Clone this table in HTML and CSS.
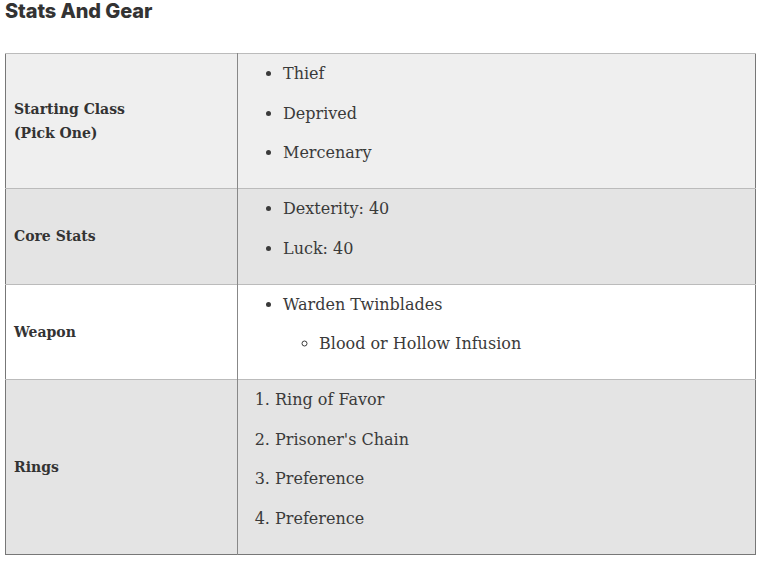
FILE: index.html
```html
<!DOCTYPE html>
<html>
<head>
<meta charset="utf-8">
<link rel="stylesheet" href="styles.css">
</head>
<body>
<div class="page">
  <h2 class="title">Stats And Gear</h2>
  <table class="gear">
    <colgroup>
      <col class="col-label">
      <col class="col-value">
    </colgroup>
    <tr class="row-a">
      <th>Starting Class<br>(Pick One)</th>
      <td>
        <ul class="list">
          <li>Thief</li>
          <li>Deprived</li>
          <li>Mercenary</li>
        </ul>
      </td>
    </tr>
    <tr class="row-b">
      <th>Core Stats</th>
      <td>
        <ul class="list">
          <li>Dexterity: 40</li>
          <li>Luck: 40</li>
        </ul>
      </td>
    </tr>
    <tr class="row-c">
      <th>Weapon</th>
      <td>
        <ul class="list">
          <li>Warden Twinblades
            <ul class="sub">
              <li>Blood or Hollow Infusion</li>
            </ul>
          </li>
        </ul>
      </td>
    </tr>
    <tr class="row-b">
      <th>Rings</th>
      <td>
        <ol class="list olist">
          <li>Ring of Favor</li>
          <li>Prisoner's Chain</li>
          <li>Preference</li>
          <li>Preference</li>
        </ol>
      </td>
    </tr>
  </table>
</div>
</body>
</html>
```

FILE: styles.css
```css
html, body {
  margin: 0;
  padding: 0;
  background: #fff;
}
.page {
  padding: 0 12px 0 5px;
  font-family: "DejaVu Serif", "Liberation Serif", serif;
  color: #333;
}
.title {
  margin: 0;
  padding-top: 0;
  height: 53px;
  font-family: Inter, "Noto Sans", sans-serif;
  font-weight: 800;
  font-size: 20px;
  line-height: 22px;
  color: #333;
  letter-spacing: -0.1px;
}
.gear {
  width: 750px;
  table-layout: fixed;
  border-collapse: collapse;
  border: 1px solid #777;
}
.col-label { width: 232px; }
.col-value { width: 518px; }
.gear tr {
  border-top: 1px solid #bbb;
}
.row-a { background: #efefef; }
.row-b { background: #e4e4e4; }
.row-c { background: #fff; }
.gear th {
  text-align: left;
  vertical-align: middle;
  padding: 0 8px;
  font-weight: 700;
  font-size: 14px;
  line-height: 24px;
  color: #333;
  border-right: 1px solid #888;
}
.gear td {
  padding: 0;
  vertical-align: top;
}
.list {
  margin: 0;
  padding: 7px 0 8.5px 45px;
  font-size: 16px;
  line-height: 26px;
  color: #3a3a3a;
}
.list li {
  margin-bottom: 13.5px;
}
.olist {
  padding-left: 37px;
}
.sub {
  list-style: circle;
  margin: 13.5px 0 0 0;
  padding-left: 36px;
}
.sub li {
  margin-bottom: 0;
}
```
